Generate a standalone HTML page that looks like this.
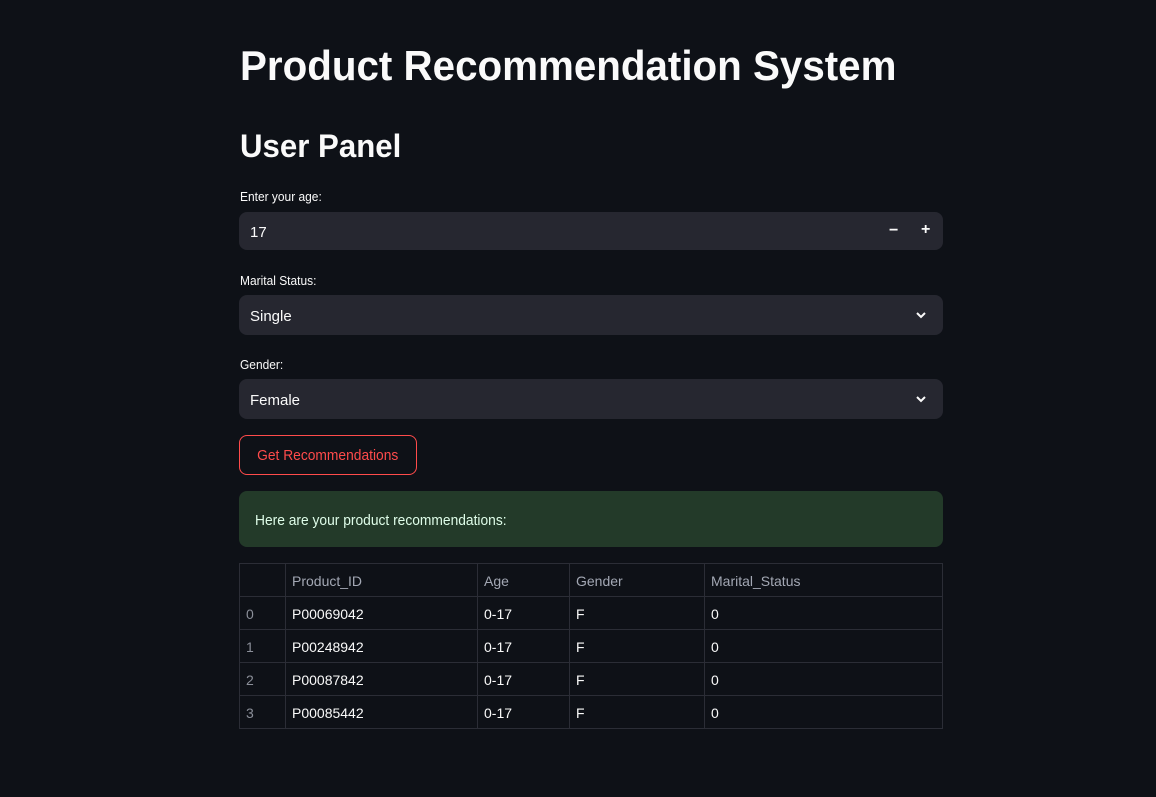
<!DOCTYPE html>
<html><head><meta charset="utf-8"><style>
*{box-sizing:border-box;margin:0;padding:0}
html,body{width:1156px;height:797px;background:#0e1117;color:#fafafa;font-family:"Liberation Sans",sans-serif;overflow:hidden}
.sx{display:inline-block;transform-origin:left center;white-space:nowrap}
h1{position:absolute;left:240px;top:40px;font-size:42px;font-weight:bold;line-height:52px}
h2{position:absolute;left:240px;top:126px;font-size:32px;font-weight:bold;line-height:40px}
.lbl{position:absolute;left:240px;font-size:13px;color:#fafafa}
.box{position:absolute;left:239px;width:704px;background:#262730;border-radius:8px;font-size:15px;display:flex;align-items:center;padding-left:11px;padding-top:2px}
.btn{position:absolute;left:239px;top:435px;width:178px;height:40px;border:1px solid #ff4b4b;border-radius:8px;color:#ff4b4b;font-size:15px;display:flex;align-items:center;justify-content:center}
.al{position:absolute;left:239px;top:491px;width:704px;height:56px;background:#233a29;border-radius:8px;color:#dffde9;font-size:15px;padding-left:16px;display:flex;align-items:center;padding-top:2px}
table{position:absolute;left:239px;top:563px;width:704px;border-collapse:collapse;font-size:14px}
td{border:1px solid #2b2d36;height:33px;padding-left:6px;padding-top:2px}
tr:first-child td{color:#a3a8b4}
td:first-child{color:#8b8f99}
</style></head><body>
<h1><span class="sx" style="transform:scaleX(0.96)">Product Recommendation System</span></h1>
<h2><span class="sx" style="transform:scaleX(0.975)">User Panel</span></h2>
<div class="lbl" style="top:189px"><span class="sx" style="transform:scaleX(0.92)">Enter your age:</span></div>
<div class="box" style="top:212px;height:38px">17
<span style="position:absolute;left:650px;top:10px;font-weight:bold;font-size:16px">−</span>
<span style="position:absolute;left:682px;top:9px;font-weight:bold;font-size:16px">+</span></div>
<div class="lbl" style="top:273px"><span class="sx" style="transform:scaleX(0.92)">Marital Status:</span></div>
<div class="box" style="top:295px;height:40px">Single
<svg style="position:absolute;left:676px;top:14px" width="12" height="12" viewBox="0 0 12 12"><path d="M2 4l4 4 4-4" stroke="#fafafa" stroke-width="2" fill="none"/></svg></div>
<div class="lbl" style="top:357px"><span class="sx" style="transform:scaleX(0.92)">Gender:</span></div>
<div class="box" style="top:379px;height:40px">Female
<svg style="position:absolute;left:676px;top:14px" width="12" height="12" viewBox="0 0 12 12"><path d="M2 4l4 4 4-4" stroke="#fafafa" stroke-width="2" fill="none"/></svg></div>
<div class="btn"><span class="sx" style="transform:scaleX(0.92);transform-origin:center">Get Recommendations</span></div>
<div class="al"><span class="sx" style="transform:scaleX(0.92)">Here are your product recommendations:</span></div>
<table>
<tr><td style="width:46px"></td><td style="width:192px">Product_ID</td><td style="width:92px">Age</td><td style="width:135px">Gender</td><td>Marital_Status</td></tr>
<tr><td>0</td><td>P00069042</td><td>0-17</td><td>F</td><td>0</td></tr>
<tr><td>1</td><td>P00248942</td><td>0-17</td><td>F</td><td>0</td></tr>
<tr><td>2</td><td>P00087842</td><td>0-17</td><td>F</td><td>0</td></tr>
<tr><td>3</td><td>P00085442</td><td>0-17</td><td>F</td><td>0</td></tr>
</table>
</body></html>
